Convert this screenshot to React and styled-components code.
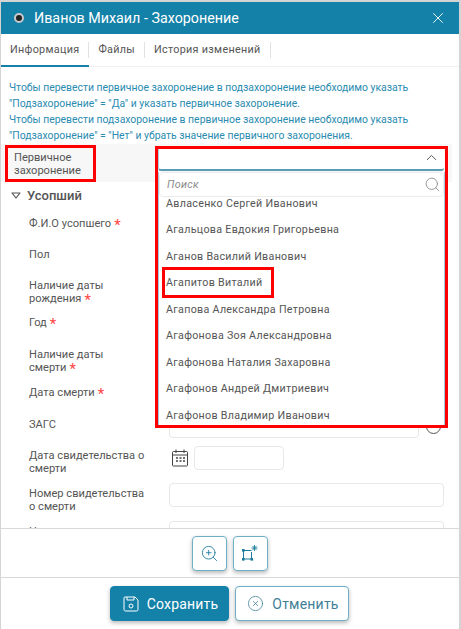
import React from 'react';
import styled, { createGlobalStyle } from 'styled-components';
import { ChevronUp, Search, X, ZoomIn, CircleX } from 'lucide-react';

const Global = createGlobalStyle`
  html, body { margin: 0; padding: 0; background: #fff; }
  * { box-sizing: border-box; }
  body { font-family: Roboto, "Noto Sans", sans-serif; }
`;

const Dialog = styled.div`
  position: relative;
  width: 461px;
  height: 629px;
  display: flex;
  flex-direction: column;
  overflow: hidden;
  background: #fff;
  border: solid #d4d4d4;
  border-width: 2px 2px 0 1px;
`;
const Header = styled.header`
  height: 32px;
  flex: none;
  display: flex;
  align-items: center;
  background: #1481a8;
  color: #fff;
  padding: 0 12px 0 13px;
`;
const Dot = styled.span`
  width: 10px;
  height: 10px;
  border-radius: 50%;
  background: #222;
  border: 2px solid #c9c9c9;
  margin-right: 10px;
`;
const Title = styled.h1`
  flex: 1;
  margin: 0;
  font-size: 14.3px;
  font-weight: 400;
  line-height: 20px;
`;
const Tabs = styled.nav`
  height: 33px;
  flex: none;
  display: flex;
  border-bottom: 1px solid #f0f0f0;
`;
const Tab = styled.div`
  display: flex;
  align-items: center;
  height: 33px;
  padding: 0 10px 0 9px;
  font-size: 10.8px;
  letter-spacing: 0.3px;
  color: #555;
  position: relative;
  border-bottom: 2px solid ${p => (p.$active ? '#1481a8' : 'transparent')};
  &::after {
    content: '';
    position: absolute;
    right: 0;
    top: 8px;
    height: 16px;
    width: 1px;
    background: #e2e2e2;
  }
`;
const Body = styled.main`
  flex: 1;
  min-height: 0;
  overflow: hidden;
`;
const Hint = styled.p`
  margin: 0;
  padding: 13px 0 0 8px;
  font-size: 10.4px;
  line-height: 16px;
  height: 77px;
  color: #2a8bb0;
`;
const HighlightRow = styled.div`
  height: 38px;
  display: flex;
  background: #f7f7f7;
  margin-right: 7px;
`;
const HighlightLabel = styled.label`
  width: 157px;
  padding: 7px 0 0 13px;
  font-size: 11.1px;
  line-height: 13px;
  color: #555;
`;
const SelectBox = styled.div`
  width: 286px;
  height: 25px;
  margin-top: 2px;
  background: #fff;
  border-bottom: 2px solid #5b9db5;
  border-left: 1px solid #a9cfdc;
  border-radius: 3px;
  display: flex;
  align-items: center;
  justify-content: flex-end;
  padding-right: 4px;
  color: #555;
`;
const Section = styled.h2`
  margin: 0;
  height: 31px;
  padding: 0 0 4px 10px;
  display: flex;
  align-items: center;
  gap: 6px;
  font-size: 13px;
  font-weight: 500;
  color: #555;
`;
const Row = styled.div`
  display: flex;
  height: ${p => p.$h}px;
`;
const Label = styled.label`
  width: 168px;
  padding: ${p => p.$pad ?? 4}px 20px 0 28px;
  font-size: 11.1px;
  line-height: 13px;
  color: #555;
`;
const Star = styled.span`
  color: #f44;
  font-size: 15px;
  line-height: 10px;
  margin-left: 3px;
  vertical-align: -3px;
`;
const Input = styled.div`
  height: 24px;
  width: ${p => p.$w || 275}px;
  background: #fff;
  border: 1px solid #e8e8e8;
  border-radius: 4px;
`;
const ControlRow = styled.div`
  display: flex;
  align-items: flex-start;
`;
const InfoCircle = styled.span`
  width: 15px;
  height: 15px;
  border-radius: 50%;
  border: 1px solid #555;
  margin: 5px 0 0 7px;
`;
const CalendarWrap = styled.span`
  width: 25px;
  height: 23px;
  display: flex;
  padding: 3px 0 0 3px;
`;
const Toolbar = styled.div`
  flex: none;
  height: 50px;
  border-top: 1px solid #d8d8d8;
  border-bottom: 1px solid #d8d8d8;
  display: flex;
  justify-content: center;
  align-items: center;
  gap: 6px;
  padding-right: 1px;
`;
const IconButton = styled.button`
  width: 35px;
  height: 35px;
  padding: 0;
  display: flex;
  align-items: center;
  justify-content: center;
  background: #fff;
  border: 1px solid #6fb0c7;
  border-radius: 4px;
  box-shadow: 0 2px 4px rgba(0, 0, 0, 0.28);
  color: #1c7a9c;
`;
const Footer = styled.footer`
  flex: none;
  height: 51px;
  display: flex;
  justify-content: center;
  gap: 6px;
  padding: 8px 0 0;
  margin-left: -2px;
`;
const ActionButton = styled.button`
  height: 35px;
  width: ${p => p.$w}px;
  display: flex;
  align-items: center;
  justify-content: center;
  gap: 8px;
  padding: 0 0 0 3px;
  font-family: inherit;
  font-size: 14px;
  letter-spacing: 0.2px;
  border-radius: 4px;
  background: ${p => (p.$primary ? '#1481a8' : '#fff')};
  color: ${p => (p.$primary ? '#fff' : '#3f7f97')};
  border: 1px solid ${p => (p.$primary ? '#1481a8' : '#6fb0c7')};
  box-shadow: 0 2px 4px rgba(0, 0, 0, 0.28);
`;
const Dropdown = styled.div`
  position: absolute;
  left: 157px;
  top: 170px;
  width: 287px;
  height: 255px;
  background: #fff;
  border: 1px solid #a3cad8;
  border-top: none;
  border-radius: 0 0 3px 3px;
  overflow: hidden;
`;
const SearchBox = styled.div`
  position: relative;
  z-index: 1;
  height: 25px;
  background: #fff;
  border: 1px solid #ececec;
  border-radius: 4px;
  display: flex;
  align-items: center;
  justify-content: space-between;
  padding: 0 2px 0 7px;
  font-size: 10.7px;
  font-style: italic;
  color: #8a8a8a;
  letter-spacing: 0.3px;
`;
const List = styled.ul`
  list-style: none;
  margin: -7px 0 0;
  padding: 0;
`;
const Item = styled.li`
  height: 26.5px;
  padding-left: 7px;
  display: flex;
  align-items: center;
  font-size: 10.7px;
  letter-spacing: 0.3px;
  color: #555;
`;
const Mark = styled.div`
  position: absolute;
  z-index: 2;
  left: ${p => p.$x}px;
  top: ${p => p.$y}px;
  width: ${p => p.$w}px;
  height: ${p => p.$h}px;
  border: 3px solid #f00;
  pointer-events: none;
`;

const TriangleIcon = () => (
  <svg width="10" height="7" viewBox="0 0 10 7" fill="none">
    <path d="M1 1h8L5 6z" stroke="#555" strokeWidth="1.2" strokeLinejoin="round" />
  </svg>
);
const CalendarIcon = () => (
  <svg width="16" height="18" viewBox="0 0 16 18" fill="none" stroke="#444" strokeWidth="1">
    <rect x="0.5" y="2.5" width="15" height="14.5" rx="1" />
    <path d="M0.5 6h15M4 0.5v3.5M12 0.5v3.5" />
    <path d="M4 9h2M7.5 9h2M11 9h2M4 12h2M7.5 12h2M11 12h2" strokeWidth="1.6" />
  </svg>
);
const VectorIcon = () => (
  <svg width="20" height="20" viewBox="0 0 20 20" fill="none" stroke="#1c7a9c" strokeWidth="1">
    <path d="M3.5 7.5h8M3.5 7.5v8.5M11.5 9v7M3.5 16h8" />
    <rect x="2" y="6" width="2.6" height="2.6" fill="#1c7a9c" stroke="none" />
    <rect x="2" y="15" width="2.6" height="2.6" fill="#1c7a9c" stroke="none" />
    <rect x="10.5" y="15" width="2.6" height="2.6" fill="#1c7a9c" stroke="none" />
    <path d="M14.5 2v6M11.5 5h6M12.4 2.9l4.2 4.2M16.6 2.9l-4.2 4.2" strokeWidth="0.9" />
  </svg>
);
const SaveIcon = () => (
  <svg width="16" height="16" viewBox="0 0 16 16" fill="none" stroke="#fff" strokeWidth="1">
    <path d="M2 1h10l3 3v9.5a1.5 1.5 0 0 1-1.5 1.5h-11A1.5 1.5 0 0 1 1 13.5V2a1 1 0 0 1 1-1z" />
    <path d="M4 1v3h7V1" />
    <circle cx="8" cy="10" r="2" />
  </svg>
);

const people = [
  'Авласенко Сергей Иванович',
  'Агальцова Евдокия Григорьевна',
  'Аганов Василий Иванович',
  'Агапитов Виталий',
  'Агапова Александра Петровна',
  'Агафонова Зоя Александровна',
  'Агафонова Наталия Захаровна',
  'Агафонов Андрей Дмитриевич',
  'Агафонов Владимир Иванович',
];

export default function App() {
  return (
    <>
      <Global />
      <Dialog>
        <Header>
          <Dot />
          <Title>Иванов Михаил - Захоронение</Title>
          <X size={18} strokeWidth={1.2} />
        </Header>
        <Tabs>
          <Tab $active>Информация</Tab>
          <Tab>Файлы</Tab>
          <Tab>История изменений</Tab>
        </Tabs>
        <Body>
          <Hint>
            Чтобы перевести первичное захоронение в подзахоронение необходимо указать
            <br />
            "Подзахоронение" = "Да" и указать первичное захоронение.
            <br />
            Чтобы перевести подзахоронение в первичное захоронение необходимо указать
            <br />
            "Подзахоронение" = "Нет" и убрать значение первичного захоронения.
          </Hint>
          <HighlightRow>
            <HighlightLabel>
              Первичное
              <br />
              захоронение
            </HighlightLabel>
            <SelectBox>
              <ChevronUp size={17} strokeWidth={1.4} />
            </SelectBox>
          </HighlightRow>
          <Section>
            <TriangleIcon />
            Усопший
          </Section>
          <Row $h={31}>
            <Label>Ф.И.О усопшего<Star>*</Star></Label>
            <Input />
          </Row>
          <Row $h={31}>
            <Label>Пол</Label>
            <Input />
          </Row>
          <Row $h={37}>
            <Label>Наличие даты<br />рождения<Star>*</Star></Label>
            <Input />
          </Row>
          <Row $h={32}>
            <Label>Год<Star>*</Star></Label>
            <Input />
          </Row>
          <Row $h={38}>
            <Label>Наличие даты<br />смерти<Star>*</Star></Label>
            <Input />
          </Row>
          <Row $h={32}>
            <Label>Дата смерти<Star>*</Star></Label>
            <Input />
          </Row>
          <Row $h={32}>
            <Label>ЗАГС</Label>
            <ControlRow>
              <Input $w={250} />
              <InfoCircle />
            </ControlRow>
          </Row>
          <Row $h={37}>
            <Label $pad={3}>Дата свидетельства о<br />смерти</Label>
            <ControlRow>
              <CalendarWrap><CalendarIcon /></CalendarWrap>
              <Input $w={90} />
            </ControlRow>
          </Row>
          <Row $h={38}>
            <Label>Номер свидетельства<br />о смерти</Label>
            <Input />
          </Row>
          <Row $h={38}>
            <Label>Номер записи</Label>
            <Input />
          </Row>
        </Body>
        <Toolbar>
          <IconButton><ZoomIn size={19} strokeWidth={1.1} /></IconButton>
          <IconButton><VectorIcon /></IconButton>
        </Toolbar>
        <Footer>
          <ActionButton $primary $w={119}><SaveIcon />Сохранить</ActionButton>
          <ActionButton $w={114}><CircleX size={17} strokeWidth={1.1} />Отменить</ActionButton>
        </Footer>
        <Dropdown>
          <SearchBox>
            Поиск
            <Search size={17} strokeWidth={1.2} color="#888" />
          </SearchBox>
          <List>
            {people.map(name => <Item key={name}>{name}</Item>)}
          </List>
        </Dropdown>
        <Mark $x={4} $y={143} $w={91} $h={37} />
        <Mark $x={154} $y={144} $w={293} $h={282} />
        <Mark $x={161} $y={265} $w={112} $h={31} />
      </Dialog>
    </>
  );
}
